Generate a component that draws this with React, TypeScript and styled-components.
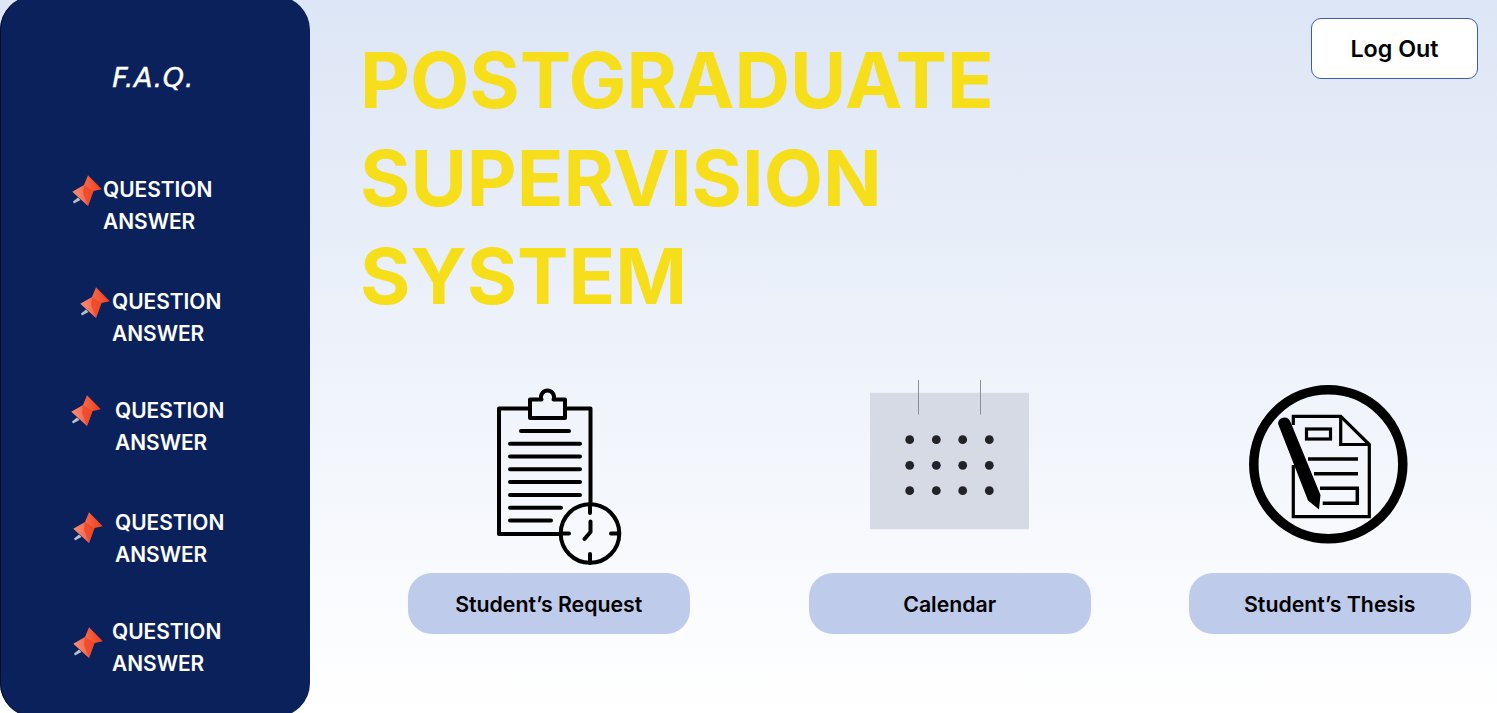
import React from 'react';
import styled, { createGlobalStyle } from 'styled-components';

const GlobalStyle = createGlobalStyle`
  html, body {
    margin: 0;
    padding: 0;
    height: 713px;
    overflow: hidden;
    background: #fff;
  }
  * {
    box-sizing: border-box;
  }
`;

const faqItems = [
  { top: 0, pinLeft: 72, pinTop: 1, textGap: 0 },
  { top: 48, pinLeft: 80, pinTop: 1, textGap: 1 },
  { top: 45, pinLeft: 71, pinTop: 0, textGap: 13 },
  { top: 48, pinLeft: 73, pinTop: 5, textGap: 11 },
  { top: 45, pinLeft: 73, pinTop: 11, textGap: 8 },
];

const Page = styled.div`
  display: flex;
  width: 1497px;
  height: 713px;
  overflow: hidden;
  font-family: Inter, "Liberation Sans", sans-serif;
  background: linear-gradient(180deg, #dde6f6 0%, #ffffff 100%);
`;

const Sidebar = styled.aside`
  flex: 0 0 310px;
  height: 721px;
  margin: -4px 0;
  padding-top: 65px;
  border-radius: 34px;
  background: #0b215c;
  box-shadow: inset 1px 0 0 #070d22;
  color: #fff;
`;

const FaqTitle = styled.h2`
  margin: 0 0 79px;
  padding-right: 4px;
  font-family: "DejaVu Sans", sans-serif;
  font-size: 27px;
  font-style: italic;
  font-weight: 400;
  line-height: 34px;
  letter-spacing: 0.6px;
  text-align: center;
  -webkit-text-stroke: 0.4px #fff;
`;

const FaqItem = styled.div<{ $top: number; $pinLeft: number; $textGap: number }>`
  display: flex;
  align-items: flex-start;
  gap: ${(p) => p.$textGap}px;
  height: 64px;
  margin-top: ${(p) => p.$top}px;
  padding-left: ${(p) => p.$pinLeft}px;
`;

const PinIcon = styled.svg<{ $top: number }>`
  flex: none;
  display: block;
  width: 31px;
  height: 32px;
  margin-top: ${(p) => p.$top}px;
`;

const FaqText = styled.div`
  font-size: 20.9px;
  font-weight: 600;
  line-height: 32px;
`;

const Main = styled.main`
  flex: 1;
  min-width: 0;
  padding: 18px 19px 0 50px;
`;

const Header = styled.header`
  display: flex;
  align-items: flex-start;
  justify-content: space-between;
`;

const Title = styled.h1`
  margin: 13px 0 0;
  color: #f6de1a;
  font-size: 77px;
  font-weight: 700;
  line-height: 98px;
`;

const LogoutButton = styled.button`
  width: 167px;
  height: 61px;
  border: 1px solid #3f5cab;
  border-radius: 10px;
  background: #fff;
  color: #000;
  font-family: inherit;
  font-size: 23.3px;
  font-weight: 600;
`;

const CardRow = styled.section`
  display: flex;
  margin-top: 45px;
  padding-left: 48px;
`;

const Card = styled.div<{ $left: number }>`
  flex: 0 0 281.5px;
  margin-left: ${(p) => p.$left}px;
`;

const IconSlot = styled.div`
  display: flex;
  justify-content: center;
  height: 203px;
  svg {
    display: block;
  }
`;

const CardButton = styled.button`
  display: block;
  width: 100%;
  height: 61px;
  border: 0;
  border-radius: 24px;
  background: #becbea;
  color: #000;
  font-family: inherit;
  font-size: 21.3px;
  font-weight: 600;
`;

const Pin = ({ id, top }: { id: string; top: number }) => (
  <PinIcon $top={top} viewBox="0 0 31 32">
    <defs>
      <linearGradient id={id} x1="0" y1="0.6" x2="1" y2="0.4">
        <stop offset="0" stopColor="#f6907a" />
        <stop offset="0.5" stopColor="#f3654a" />
        <stop offset="1" stopColor="#f23d16" />
      </linearGradient>
    </defs>
    <path d="M6 22.5 L1 26.5 L2 28.5 L8.5 25 Z" fill="#b9bfc8" />
    <path d="M16 0.3 L29.8 14.3 L21.5 16 L16 31 L0.3 16.7 L12 10 Z" fill={`url(#${id})`} />
    <path d="M12 10 L21.5 16 L16 31 L11 18 Z" fill="#ee4420" opacity="0.75" />
  </PinIcon>
);

const ClipboardIcon = () => (
  <svg width="182" height="200" viewBox="-22 -10 182 200" fill="none" stroke="#000" strokeWidth="4" strokeLinecap="round" strokeLinejoin="round">
    <path d="M50 28.5 H19 V154 H82" strokeLinecap="butt" />
    <path d="M85 28.5 H110.5 V123" strokeLinecap="butt" />
    <path d="M50 38 V19.5 H61.5 A6.5 6.5 0 1 1 73.5 19.5 H85 V38 Z" />
    <path d="M41 51 H89" />
    <path d="M30 63.7 H100 M30 76.5 H100 M30 89.3 H100 M30 102 H100 M30 115 H100" />
    <path d="M30 127.7 H81 M30 140.5 H71" />
    <circle cx="110" cy="153.5" r="29.3" />
    <path d="M110 124 V133 M110 174 V183 M81 153.5 H89 M131 153.5 H138" />
    <path d="M110.5 141.5 V152 L104.5 159" />
  </svg>
);

const calendarDots = [49.7, 76.3, 102.7, 129.3].flatMap((cx) =>
  [69.7, 95.3, 120.7].map((cy) => ({ cx, cy }))
);

const CalendarIcon = () => (
  <svg width="180" height="170" viewBox="0 0 180 170">
    <rect x="10" y="22.7" width="159" height="136.6" rx="1" fill="#d5dae5" />
    <path d="M58.5 10 V44.5 M120.5 10 V44.5" stroke="#8a8e9a" strokeWidth="1" />
    {calendarDots.map((d) => (
      <circle key={`${d.cx}-${d.cy}`} cx={d.cx} cy={d.cy} r="4.4" fill="#222326" />
    ))}
  </svg>
);

const ThesisIcon = () => (
  <svg width="180" height="185" viewBox="0 -5 180 185" fill="none" stroke="#000">
    <circle cx="88.3" cy="89.3" r="74.5" strokeWidth="9.5" />
    <path d="M53.3 50 V41.3 H100.7 L129.3 69.5 V141.7 H53.3 V90" strokeWidth="3.2" />
    <path d="M100.7 41.3 V69.5 H129.3" strokeWidth="3.2" />
    <rect x="66.5" y="54" width="24" height="10" strokeWidth="3.2" />
    <path d="M68 84 H118 M74 98.7 H118" strokeWidth="3.5" />
    <path d="M80 113.3 H117.3 V128.3 H82.7" strokeWidth="3.5" />
    <path d="M38.5 50 C37 45.5 41 42.5 44.5 42.5 C47.5 42.5 49.5 44.5 50.5 47 L80.5 120 L79 134.5 L68 125.5 Z" fill="#000" stroke="none" />
  </svg>
);

const App: React.FC = () => {
  return (
    <Page>
      <GlobalStyle />
      <Sidebar>
        <FaqTitle>F.A.Q.</FaqTitle>
        {faqItems.map((item, index) => (
          <FaqItem key={index} $top={item.top} $pinLeft={item.pinLeft} $textGap={item.textGap}>
            <Pin id={`pin-${index}`} top={item.pinTop} />
            <FaqText>
              QUESTION
              <br />
              ANSWER
            </FaqText>
          </FaqItem>
        ))}
      </Sidebar>
      <Main>
        <Header>
          <Title>
            POSTGRADUATE
            <br />
            SUPERVISION
            <br />
            SYSTEM
          </Title>
          <LogoutButton type="button">Log Out</LogoutButton>
        </Header>
        <CardRow>
          <Card $left={0}>
            <IconSlot>
              <ClipboardIcon />
            </IconSlot>
            <CardButton type="button">Student’s Request</CardButton>
          </Card>
          <Card $left={119.5}>
            <IconSlot>
              <CalendarIcon />
            </IconSlot>
            <CardButton type="button">Calendar</CardButton>
          </Card>
          <Card $left={98.5}>
            <IconSlot>
              <ThesisIcon />
            </IconSlot>
            <CardButton type="button">Student’s Thesis</CardButton>
          </Card>
        </CardRow>
      </Main>
    </Page>
  );
};

export default App;
